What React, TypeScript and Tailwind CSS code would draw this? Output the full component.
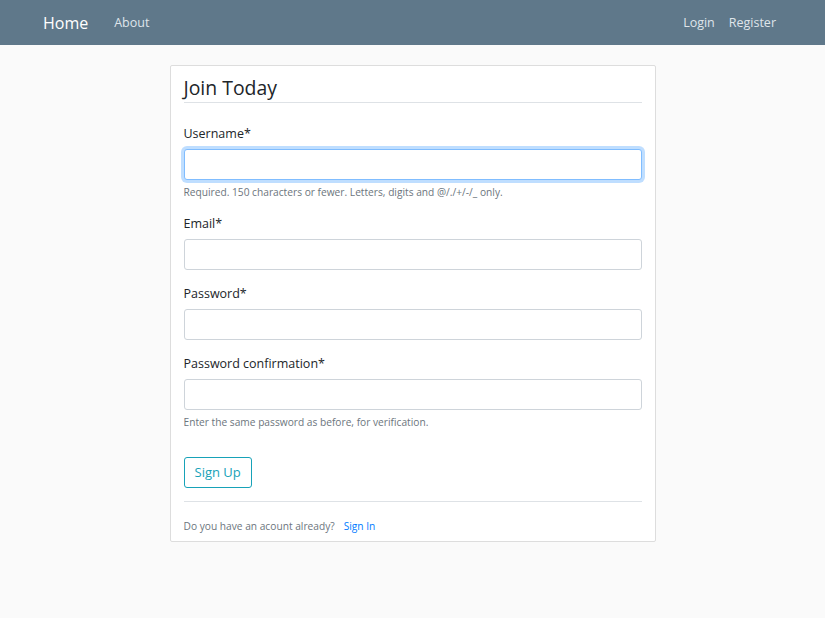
export default function App() {
  const fields = [
    { label: 'Username', help: 'Required. 150 characters or fewer. Letters, digits and @/./+/-/_ only.', focus: true },
    { label: 'Email' },
    { label: 'Password' },
    { label: 'Password confirmation', help: 'Enter the same password as before, for verification.' },
  ];

  return (
    <div className="min-h-[618px] bg-[#fafafa] text-[#212529]" style={{ fontFamily: '"Open Sans", "Noto Sans", sans-serif' }}>
      <header className="h-[45px] bg-[#5f788a] flex items-center justify-between pl-[43px] pr-[49px] pt-[1px]">
        <div className="flex items-center">
          <span className="text-[16px] text-white">Home</span>
          <span className="ml-[26px] text-[12.5px] text-[#dfe5ea]">About</span>
        </div>
        <div className="flex items-center gap-[14px] text-[12.5px] text-[#dfe5ea]">
          <span>Login</span>
          <span>Register</span>
        </div>
      </header>

      <main className="pt-5 flex justify-center">
        <div className="w-[486px] bg-white border border-[#dddddd] rounded-[2px] px-[13px] pt-[9px] pb-[5px]">
          <h2 className="text-[19.4px] leading-[26px] border-b border-[#dee2e6] pb-[1px]">Join Today</h2>

          <div className="mt-[20px]">
            {fields.map((f, i) => (
              <div key={f.label} className={i === 0 ? 'mb-[14px]' : 'mb-[13px]'}>
                <label className="block text-[12.5px] leading-[20px] pt-[1px] mb-[5px]">{f.label}*</label>
                <div
                  className={
                    f.focus
                      ? 'h-[31px] rounded-[3px] border border-[#80bdff] shadow-[0_0_0_3px_rgba(0,123,255,0.25)] bg-white'
                      : 'h-[31px] rounded-[3px] border border-[#ced4da] bg-white'
                  }
                />
                {f.help && <p className="mt-[5px] text-[10.2px] leading-[14px] text-[#6c757d]">{f.help}</p>}
              </div>
            ))}
          </div>

          <button className="mt-[15px] h-[31px] px-[10px] rounded-[3px] border border-[#17a2b8] text-[#17a2b8] text-[13px]">
            Sign Up
          </button>

          <div className="mt-[13px] border-t border-[#dee2e6] pt-[17px] pb-[2px] text-[10.2px] text-[#6c757d]">
            Do you have an acount already?
            <span className="ml-[9px] text-[#007bff]">Sign In</span>
          </div>
        </div>
      </main>
    </div>
  );
}
